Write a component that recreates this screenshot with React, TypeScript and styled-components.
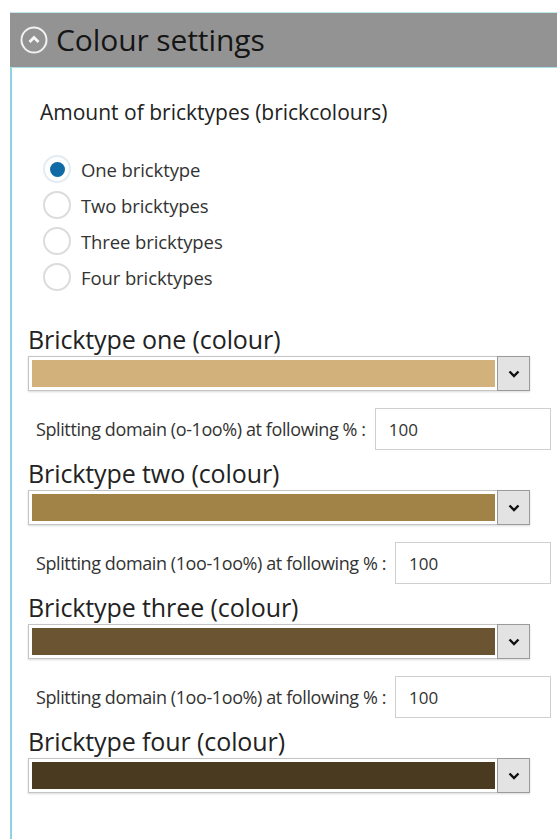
import React, { useState } from "react";
import styled, { createGlobalStyle } from "styled-components";

const Global = createGlobalStyle`
  html, body { margin: 0; padding: 0; background: #ffffff; }
  body { font-family: "Open Sans", "Noto Sans", sans-serif; color: #222; }
`;

const Panel = styled.div`
  margin: 12px 0 0 10px;
  display: flex;
  flex-direction: column;
`;

const Header = styled.div`
  height: 54px;
  background: #939393;
  border-top: 1px solid #bfe8ef;
  border-bottom: 1px solid #a9e0ea;
  display: flex;
  align-items: center;
  gap: 8px;
  padding-left: 10px;
`;

const Title = styled.span`
  font-size: 30px;
  color: #151515;
  letter-spacing: -0.1px;
  margin-top: -2px;
`;

const Body = styled.div`
  border-left: 2px solid #8dd3e2;
  padding: 30px 6px 60px 0;
  display: flex;
  flex-direction: column;
  min-height: 700px;
`;

const GroupTitle = styled.div`
  font-size: 21px;
  line-height: 28px;
  color: #222;
  padding-left: 28px;
`;

const RadioList = styled.div`
  display: flex;
  flex-direction: column;
  margin: 25px 0 31px 31px;
`;

const RadioRow = styled.label`
  display: flex;
  align-items: center;
  height: 36px;
  gap: 10px;
  font-size: 18.5px;
  letter-spacing: -0.1px;
  color: #333;
  cursor: pointer;
`;

const RadioDot = styled.span<{ $on: boolean }>`
  width: 24px;
  height: 24px;
  border-radius: 50%;
  border: 2px solid ${(p) => (p.$on ? "#e2ecf2" : "#dcdcdc")};
  background: #fff;
  display: flex;
  align-items: center;
  justify-content: center;
  &::after {
    content: "";
    width: 15px;
    height: 15px;
    border-radius: 50%;
    background: ${(p) => (p.$on ? "#0f6aa6" : "transparent")};
  }
`;

const Section = styled.div`
  display: flex;
  flex-direction: column;
  padding-left: 16px;
  margin-bottom: 10px;
`;

const SectionTitle = styled.div`
  font-size: 25px;
  line-height: 28px;
  color: #222;
  letter-spacing: -0.1px;
  margin-bottom: 3px;
  margin-top: -1px;
`;

const Select = styled.div`
  width: 502px;
  height: 35px;
  border: 1px solid #c4c4c4;
  box-shadow: 0 1px 2px rgba(0, 0, 0, 0.15);
  display: flex;
  background: #fff;
  box-sizing: border-box;
`;

const Swatch = styled.div<{ $color: string }>`
  flex: 1;
  margin: 3px 2px 3px 3px;
  background: ${(p) => p.$color};
`;

const SelectButton = styled.div`
  width: 31px;
  background: #e3e3e3;
  border: 1px solid #9a9a9a;
  margin: -1px -1px -1px 0;
  display: flex;
  align-items: center;
  justify-content: center;
`;

const SplitRow = styled.div`
  display: flex;
  align-items: center;
  gap: 9px;
  margin-top: 17px;
  padding-left: 8px;
`;

const SplitLabel = styled.span`
  font-size: 18px;
  color: #333;
  letter-spacing: -0.4px;
  white-space: nowrap;
`;

const SplitInput = styled.div`
  flex: 1;
  height: 42px;
  box-sizing: border-box;
  border: 1px solid #cfcfcf;
  padding-left: 13px;
  display: flex;
  align-items: center;
  font-size: 17px;
  color: #333;
`;

const Chevron = () => (
  <svg width="12" height="8" viewBox="0 0 12 8">
    <path d="M1.5 1.5 L6 6 L10.5 1.5" fill="none" stroke="#111" strokeWidth="2.4" />
  </svg>
);

const CollapseIcon = () => (
  <svg width="28" height="28" viewBox="0 0 28 28">
    <circle cx="14" cy="14" r="12.5" fill="none" stroke="#f2f2f2" strokeWidth="2" />
    <path d="M9.5 16 L14 11.5 L18.5 16" fill="none" stroke="#f7f7f7" strokeWidth="2.8" />
  </svg>
);

const radios = ["One bricktype", "Two bricktypes", "Three bricktypes", "Four bricktypes"];

const bricks = [
  { title: "Bricktype one (colour)", color: "#d2b17b", split: "Splitting domain (o-1oo%) at following % :" },
  { title: "Bricktype two (colour)", color: "#a18347", split: "Splitting domain (1oo-1oo%) at following % :" },
  { title: "Bricktype three (colour)", color: "#6b5432", split: "Splitting domain (1oo-1oo%) at following % :" },
  { title: "Bricktype four (colour)", color: "#4a3a1f", split: null as string | null },
];

export default function App() {
  const [chosen, setChosen] = useState(0);
  return (
    <>
      <Global />
      <Panel>
        <Header>
          <CollapseIcon />
          <Title>Colour settings</Title>
        </Header>
        <Body>
          <GroupTitle>Amount of bricktypes (brickcolours)</GroupTitle>
          <RadioList>
            {radios.map((r, i) => (
              <RadioRow key={r} onClick={() => setChosen(i)}>
                <RadioDot $on={chosen === i} />
                {r}
              </RadioRow>
            ))}
          </RadioList>
          {bricks.map((b) => (
            <Section key={b.title}>
              <SectionTitle>{b.title}</SectionTitle>
              <Select>
                <Swatch $color={b.color} />
                <SelectButton>
                  <Chevron />
                </SelectButton>
              </Select>
              {b.split && (
                <SplitRow>
                  <SplitLabel>{b.split}</SplitLabel>
                  <SplitInput>100</SplitInput>
                </SplitRow>
              )}
            </Section>
          ))}
        </Body>
      </Panel>
    </>
  );
}
